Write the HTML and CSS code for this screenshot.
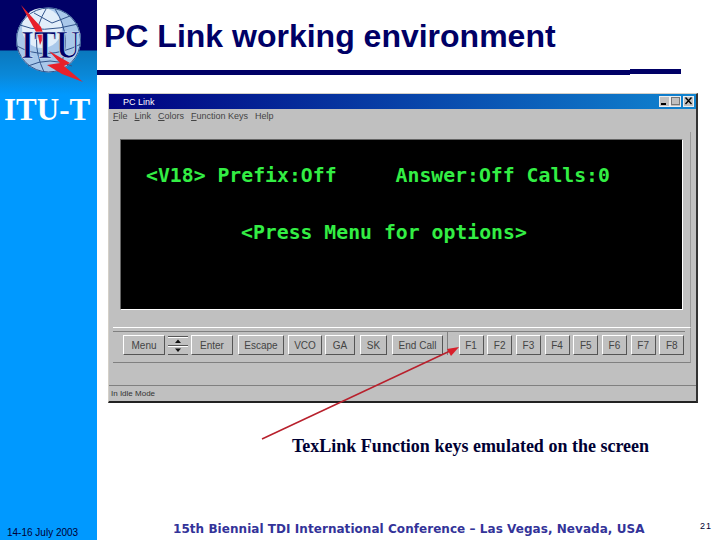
FILE: index.html
```html
<!DOCTYPE html>
<html lang="en">
<head>
    <meta charset="UTF-8">
    <title>PC Link working environment</title>
    <link rel="stylesheet" href="styles.css">
</head>
<body>
    <div class="slide">
        <!-- Left band -->
        <div class="band">
            <svg class="logo" width="97" height="84" viewBox="0 0 97 84">
                <circle cx="48.5" cy="40" r="32.5" fill="#a9c8ea"/>
                <circle cx="42" cy="28" r="20" fill="#e2eefa"/>
                <g fill="none" stroke="#33558c" stroke-width="1">
                    <circle cx="48.5" cy="40" r="32"/>
                    <path d="M20 25 Q40 34 78 24"/>
                    <path d="M17 46 Q45 62 81 44"/>
                    <path d="M28 66 Q50 56 72 66"/>
                    <path d="M46 9 Q28 38 44 72"/>
                    <path d="M55 9 Q74 38 58 72"/>
                    <path d="M34 13 L52 23 L70 16"/>
                </g>
                <path d="M21 5 L41 27 L44 36 L40 45 L38 36 L35 30 Z" fill="#e8202a"/>
                <path d="M49 51 L70 63 L64 66 L83 82 L62 74 L47 65 L60 63 Z" fill="#e8202a"/>
                <text class="logo-text" x="21" y="58" textLength="59" lengthAdjust="spacingAndGlyphs">ITU</text>
            </svg>
            <div class="sector">ITU-T</div>
            <div class="date">14-16 July 2003</div>
        </div>

        <div class="main">
            <h1 class="title">PC Link working environment</h1>
            <div class="rule">
                <div class="rule-long"></div>
                <div class="rule-short"></div>
            </div>

            <!-- Screenshot of the application -->
            <div class="window">
                <div class="titlebar">
                    <span class="titlebar-name">PC Link</span>
                    <div class="window-buttons">
                        <span class="window-button">
                            <svg width="11" height="10" viewBox="0 0 11 10"><rect x="2" y="7" width="5" height="2" fill="#000"/></svg>
                        </span>
                        <span class="window-button">
                            <svg width="11" height="10" viewBox="0 0 11 10"><rect x="1.5" y="1.5" width="8" height="7" fill="none" stroke="#777"/></svg>
                        </span>
                        <span class="window-button window-button-close">
                            <svg width="11" height="10" viewBox="0 0 11 10"><path d="M2.5 1.5 L8.5 8 M8.5 1.5 L2.5 8" stroke="#000" stroke-width="1.4"/></svg>
                        </span>
                    </div>
                </div>
                <div class="menubar">
                    <span><u>F</u>ile</span>
                    <span><u>L</u>ink</span>
                    <span><u>C</u>olors</span>
                    <span><u>F</u>unction Keys</span>
                    <span>Help</span>
                </div>
                <div class="screen">
                    <div class="terminal">
                        <div class="terminal-row">
                            <span>&lt;V18&gt; Prefix:Off</span>
                            <span class="term-answer">Answer:Off Calls:0</span>
                        </div>
                        <div class="terminal-prompt">&lt;Press Menu for options&gt;</div>
                    </div>
                </div>
                <div class="toolbar">
                    <div class="toolbar-group">
                        <button class="key key-menu">Menu</button>
                        <span class="spinner">
                            <svg width="20" height="19" viewBox="0 0 20 19">
                                <path d="M0 .5H20M0 9.5H20M0 18.5H20" stroke="#555"/>
                                <path d="M0 1.5H20M0 10.5H20" stroke="#fff"/>
                                <path d="M10 3.5 L7 7 H13 Z M10 16 L7 12.5 H13 Z" fill="#111"/>
                            </svg>
                        </span>
                        <button class="key key-enter">Enter</button>
                        <button class="key key-escape">Escape</button>
                        <button class="key key-vco">VCO</button>
                        <button class="key key-ga">GA</button>
                        <button class="key key-sk">SK</button>
                        <button class="key key-end">End Call</button>
                    </div>
                    <div class="toolbar-group toolbar-fkeys">
                        <button class="key fkey">F1</button>
                        <button class="key fkey">F2</button>
                        <button class="key fkey">F3</button>
                        <button class="key fkey">F4</button>
                        <button class="key fkey">F5</button>
                        <button class="key fkey">F6</button>
                        <button class="key fkey">F7</button>
                        <button class="key fkey">F8</button>
                    </div>
                </div>
                <div class="statusbar">In Idle Mode</div>
            </div>

            <p class="caption">TexLink Function keys emulated on the screen</p>

            <div class="footer">
                <span class="conference">15th Biennial TDI International Conference – Las Vegas, Nevada, USA</span>
                <span class="page-number">21</span>
            </div>
        </div>

        <!-- Arrow over the screenshot -->
        <svg class="arrow" width="720" height="540" viewBox="0 0 720 540">
            <path d="M262 439 L450 351" stroke="#b8202c" stroke-width="1.5" fill="none"/>
            <path d="M459 347 L447 349 L451 356 Z" fill="#d81e2a"/>
        </svg>
    </div>
</body>
</html>
```

FILE: styles.css
```css
html, body {
    margin: 0;
    padding: 0;
}
.slide {
    position: relative;
    width: 720px;
    height: 540px;
    display: flex;
    background: #ffffff;
    overflow: hidden;
}
.band {
    width: 97px;
    height: 540px;
    flex-shrink: 0;
    display: flex;
    flex-direction: column;
    background: linear-gradient(#000066 0, #000066 50px, #0a78bd 51px, #0a88d8 75px, #0099ff 95px);
}
.logo {
    display: block;
}
.logo-text {
    font-family: "Liberation Serif", serif;
    font-weight: bold;
    font-size: 39px;
    fill: #000066;
    stroke: #dfeaf6;
    stroke-width: 0.7px;
}
.sector {
    margin-top: 9px;
    padding-left: 4px;
    font-family: "Liberation Serif", serif;
    font-weight: bold;
    font-size: 31px;
    line-height: 34px;
    color: #ffffff;
}
.date {
    margin-top: auto;
    padding: 0 0 1px 7px;
    font-family: "Liberation Sans", sans-serif;
    font-size: 10px;
    line-height: 13px;
    color: #000033;
}
.main {
    flex: 1;
    display: flex;
    flex-direction: column;
    min-width: 0;
}
.title {
    margin: 16px 0 0 7px;
    font-family: "Liberation Sans", sans-serif;
    font-weight: bold;
    font-size: 32px;
    line-height: 40px;
    color: #000066;
}
.rule {
    display: flex;
    align-items: flex-start;
    width: 584px;
    height: 5px;
    margin-top: 14px;
}
.rule-long {
    width: 533px;
    height: 5px;
    background: #000066;
}
.rule-short {
    width: 51px;
    height: 5px;
    margin-top: -1px;
    background: #000066;
}
.window {
    width: 590px;
    height: 310px;
    margin: 18px 0 0 11px;
    box-sizing: border-box;
    display: flex;
    flex-direction: column;
    background: #c0c0c0;
    border-top: 1px solid #d4d0c8;
    border-left: 1px solid #d4d0c8;
    border-right: 2px solid #333333;
    border-bottom: 2px solid #222222;
    font-family: "Liberation Sans", sans-serif;
}
.titlebar {
    height: 15px;
    flex-shrink: 0;
    display: flex;
    align-items: center;
    justify-content: space-between;
    padding: 0 2px 0 14px;
    background: linear-gradient(90deg, #000080, #1084d0);
}
.titlebar-name {
    font-size: 9px;
    color: #ffffff;
}
.window-buttons {
    display: flex;
}
.window-button {
    width: 11px;
    height: 11px;
    display: flex;
    background: #c0c0c0;
    border: 1px solid #eeeeee;
    box-sizing: border-box;
    overflow: hidden;
}
.window-button svg {
    margin: -1px;
}
.window-button-close {
    margin-left: 2px;
}
.menubar {
    height: 13px;
    flex-shrink: 0;
    display: flex;
    align-items: center;
    gap: 7px;
    padding-left: 4px;
    font-size: 9px;
    color: #444444;
}
.screen {
    margin: 10px 5px 0 11px;
    padding: 7px 7px 17px 0;
    border-right: 1px solid #999999;
}
.terminal {
    height: 171px;
    background: #000000;
    border-top: 1px solid #666666;
    border-left: 1px solid #666666;
    border-bottom: 1px solid #ffffff;
    border-right: 1px solid #ffffff;
    box-sizing: border-box;
    font-family: "DejaVu Sans Mono", monospace;
    font-weight: bold;
    font-size: 19.8px;
    line-height: 24px;
    color: #33ee44;
}
.terminal-row {
    display: flex;
    padding: 24px 0 0 25px;
    white-space: pre;
}
.term-answer {
    margin-left: 59px;
}
.terminal-prompt {
    margin: 33px 0 0 120px;
    white-space: pre;
}
.toolbar {
    height: 36px;
    flex-shrink: 0;
    margin: 0 5px 0 4px;
    display: flex;
    align-items: flex-start;
    padding-top: 3px;
    border-top: 1px solid #ffffff;
    border-bottom: 1px solid #808080;
    border-right: 1px solid #999999;
    box-sizing: border-box;
}
.toolbar-group {
    display: flex;
    align-items: center;
    gap: 3px;
    width: 335px;
    height: 24px;
    box-sizing: border-box;
    padding: 3px 0 0 10px;
    border-top: 1px solid #808080;
}
.toolbar-fkeys {
    flex: 1;
    margin-right: 5px;
    padding-left: 11px;
    border-left: 1px solid #808080;
}
.key {
    height: 20px;
    padding: 0;
    flex-shrink: 0;
    background: #c0c0c0;
    border: 1px solid;
    border-color: #ffffff #555555 #555555 #ffffff;
    font-family: "Liberation Sans", sans-serif;
    font-size: 10px;
    color: #444444;
}
.key-menu { width: 42px; }
.key-enter { width: 42px; }
.key-escape { width: 46px; margin-left: 2px; }
.key-vco { width: 34px; margin-left: 1px; }
.key-ga { width: 30px; }
.key-sk { width: 27px; margin-left: 2px; }
.key-end { width: 51px; margin-left: 2px; }
.fkey {
    width: 25px;
    margin-right: 0.7px;
}
.spinner {
    display: flex;
    width: 20px;
    height: 19px;
}
.statusbar {
    height: 15px;
    margin-top: 22px;
    padding-left: 2px;
    border-top: 1px solid #808080;
    font-size: 8px;
    line-height: 16px;
    color: #333333;
}
.caption {
    margin: 32px 0 0 195px;
    font-family: "Liberation Serif", serif;
    font-weight: bold;
    font-size: 18px;
    line-height: 22px;
    color: #000033;
    white-space: nowrap;
}
.footer {
    margin-top: auto;
    height: 19px;
    padding-bottom: 2px;
    display: flex;
    align-items: center;
    font-family: "DejaVu Sans", sans-serif;
}
.conference {
    margin-left: 76px;
    font-weight: bold;
    font-size: 12px;
    letter-spacing: 0.05px;
    color: #333399;
    white-space: nowrap;
}
.page-number {
    margin: 0 0 6px auto;
    padding-right: 8px;
    font-family: "Liberation Sans", sans-serif;
    font-size: 9px;
    letter-spacing: 1px;
    color: #000033;
}
.arrow {
    position: absolute;
    top: 0;
    left: 0;
    pointer-events: none;
}
```
